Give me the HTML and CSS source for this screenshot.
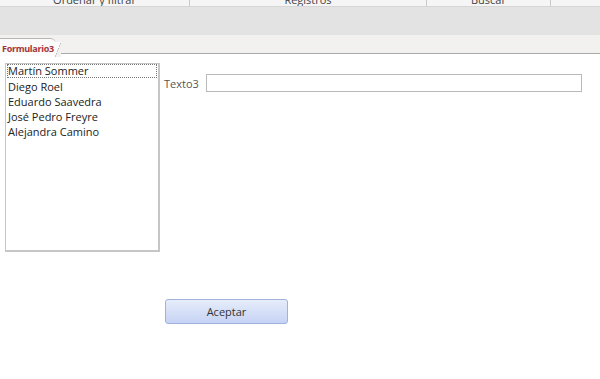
FILE: index.html
```html
<!DOCTYPE html>
<html lang="es">

<head>
    <meta charset="UTF-8">
    <title>Formulario3</title>
    <link rel="stylesheet" href="styles.css">
</head>

<body>
    <!-- Ribbon (cut off at the top) -->
    <div class="ribbon">
        <div class="group g1">Ordenar y filtrar</div>
        <div class="group g2">Registros</div>
        <div class="group g3">Buscar</div>
        <div class="group g4"></div>
    </div>
    <div class="band"></div>

    <!-- Document tabs -->
    <div class="tabs">
        <div class="tab">Formulario3</div>
    </div>

    <!-- Form -->
    <div class="form">
        <div class="row">
            <ul class="listbox">
                <li class="selected">Martín Sommer</li>
                <li>Diego Roel</li>
                <li>Eduardo Saavedra</li>
                <li>José Pedro Freyre</li>
                <li>Alejandra Camino</li>
            </ul>
            <div class="field">
                <label for="texto3">Texto3</label>
                <input id="texto3" type="text">
            </div>
        </div>
        <button class="btn">Aceptar</button>
    </div>
</body>

</html>
```

FILE: styles.css
```css
body {
    margin: 0;
    font-family: "Open Sans", "Noto Sans", sans-serif;
    background-color: white;
    overflow: hidden;
}

.ribbon {
    display: flex;
    height: 6px;
    overflow: hidden;
    background-color: #f5f5f5;
    border-bottom: 1px solid #d6d6d6;
}

.group {
    font-size: 11px;
    line-height: 11px;
    margin-top: -6px;
    color: #444;
    text-align: center;
    border-right: 1px solid #c9c9c9;
}

.g1 { width: 189px; }
.g2 { width: 236px; }
.g3 { width: 123px; }
.g4 { border-right: none; }

.band {
    height: 28px;
    background-color: #e3e3e3;
}

.tabs {
    height: 18px;
    background-color: #f2f1f0;
    border-bottom: 1px solid #a9a9a9;
}

.tab {
    position: relative;
    display: inline-block;
    height: 18px;
    padding: 0 2px 0 2px;
    font-size: 9px;
    font-weight: bold;
    line-height: 19px;
    color: #a3323a;
    letter-spacing: -0.3px;
    background-color: #fbfbfb;
    border-top: 1px solid #b5b5b5;
    border-top-right-radius: 6px;
    box-sizing: border-box;
}

.tab::after {
    content: "";
    position: absolute;
    right: -5px;
    top: 3px;
    width: 6px;
    height: 15px;
    background: linear-gradient(to right bottom, #fbfbfb 48%, #a9a9a9 50%, #f2f1f0 56%);
}

.form {
    padding: 9px 0 0 5px;
}

.row {
    display: flex;
}

.listbox {
    list-style: none;
    margin: 0;
    padding: 0 1px;
    width: 155px;
    height: 189px;
    box-sizing: border-box;
    border: 1px solid #c6c6c6;
    border-right-width: 2px;
    border-bottom-width: 2px;
    font-size: 11px;
    color: #222;
}

.listbox li {
    height: 15px;
    line-height: 15px;
    padding-left: 1px;
    box-sizing: border-box;
}

.listbox li.selected {
    height: 14px;
    border: 1px dotted #777;
    padding-left: 0;
    line-height: 12px;
    margin-bottom: 1px;
}

.field {
    display: flex;
    align-items: center;
    margin-top: 11px;
    height: 18px;
}

.field label {
    font-size: 11px;
    color: #555;
    margin-left: 4px;
    width: 42px;
}

.field input {
    width: 376px;
    height: 18px;
    box-sizing: border-box;
    border: 1px solid #b9b9b9;
    padding: 0;
    margin: 0;
}

.btn {
    display: block;
    margin: 47px 0 0 160px;
    width: 123px;
    height: 25px;
    font-family: inherit;
    font-size: 11px;
    color: #333;
    border: 1px solid #9fb1dd;
    border-radius: 3px;
    background: linear-gradient(#e6ecfa, #c6d3f4);
}
```
